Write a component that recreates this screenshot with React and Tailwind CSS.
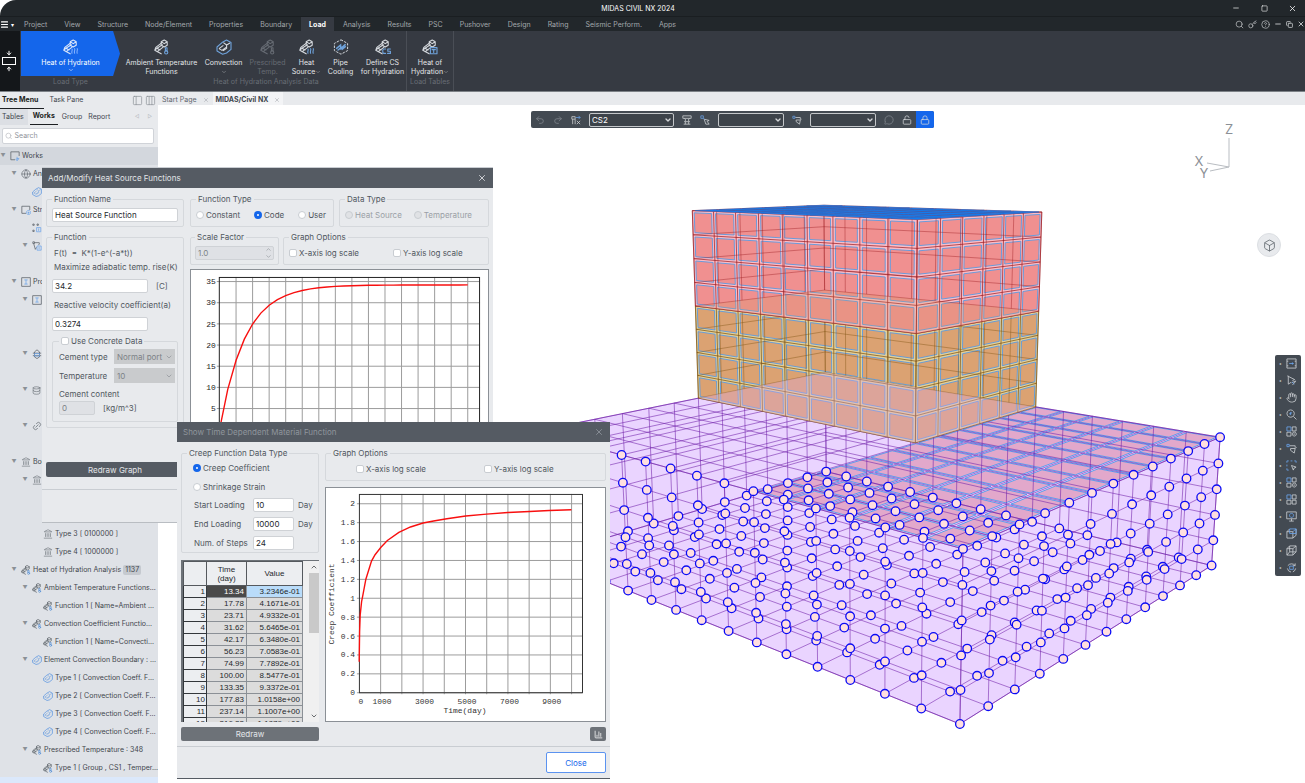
import React from 'react';
import clsx from 'clsx';
import {
  Search, Key, CircleHelp, Minus, Square, X, Copy, Menu, Undo2, Redo2, Lock, LockOpen,
  Box, ChevronDown, ChevronUp, BarChart3, Hand, ArrowDown, ArrowUp,
  Landmark, Link2, Database, PanelLeft, Columns3, MessageCircle, Globe,
} from 'lucide-react';

/* ---------- icons ---------- */

const HydrationIcon = ({ size = 16, tone = '#d5d9de', accent = '#6fa3dc', mark = 'wave' }) => (
  <svg width={size} height={size} viewBox="0 0 16 16" fill="none" stroke={tone} strokeWidth="1.1" strokeLinejoin="round" strokeLinecap="round">
    <path d="M7.2 2.8v3.4l3 1.8 3-1.8V2.8l-3-1.8zM7.2 2.8l3 1.8 3-1.8" />
    <path d="M7 4.4 1.8 8.4.8 11.2l6.4 3.6M3.2 12.6 8.8 8.4M1 11.2l2-2 5.4-3.4M3 9.2l3 1.8" />
    {mark === 'wave' && <path stroke={accent} d="M9 10.2c1 1-1 2 0 4M11.6 9.6c1 1-1 2.4 0 4.6M14.2 9.6c1 1-1 2.4 0 4.6" />}
    {mark === 'temp' && <><path stroke={accent} d="M11.4 8.8h1.6v3.2h-1.6z" /><circle stroke={accent} cx="12.2" cy="13.4" r="1.6" /></>}
    {mark === 'table' && <><rect stroke={accent} x="8.4" y="8.6" width="6.6" height="6.2" /><path stroke={accent} d="M10 10.6h3.4M11.7 10.6v2.8" /></>}
    {mark === 'cs' && <path stroke={accent} d="M10.6 10H8.6l-.8 1v2.4l.8 1h2M15.4 10h-2.6v2.2h2.6v2.2h-2.8" />}
  </svg>
);

const ConvectionIcon = ({ size = 16, tone = '#6fa3dc', accent = '#d5d9de' }) => (
  <svg width={size} height={size} viewBox="0 0 16 16" fill="none" stroke={tone} strokeWidth="1.1" strokeLinejoin="round">
    <path d="M6 3.6 10.5 1 15 3.4v7L10.6 14l-4 1.2L1 12V8z" />
    <path stroke={accent} d="M7.4 3.6 10.6 6v3.4L7 11.8M10.6 6 14 4M3 9.6l3 1.8 4-3M3 9.6l4.4-3.2" />
  </svg>
);

const PipeIcon = () => (
  <svg width="16" height="16" viewBox="0 0 16 16" fill="none" stroke="#d5d9de" strokeWidth="1">
    <path strokeDasharray="2.4 1.2" d="M8 .8 14.6 4.4v7.2L8 15.2 1.4 11.6V4.4z" />
    <path stroke="#6fa3dc" strokeWidth="1.4" strokeLinecap="round" d="m3.6 9.4 4-3.4v3.6l4.6-4M5 11l3.4-2.8M9 10.4l3.4-2.8" />
  </svg>
);

// small two-tone glyphs: base strokes follow the text colour, accent strokes are blue
const Glyph = ({ size = 10, base, accent }) => (
  <svg width={size} height={size} viewBox="0 0 12 12" fill="none" stroke="currentColor" strokeWidth="0.9">
    <path d={base} />
    <path d={accent} stroke="#6ba4ea" />
  </svg>
);

const glyphs = {
  works: { base: 'M1 1h10v5M6 10.5H1V1', accent: 'M8.5 7v4.5M6.5 9.5l2 2 2-2M8 9h3' },
  structure: { base: 'M1 1.5h9.5V6M6 10H1V1.5', accent: 'M9 6.5a2.5 2.5 0 1 0 .1 0zM9 8v2.5M7.8 9.2h2.5' },
  nodes: { base: 'M1 1.2h1.6v1.6H1zM6 1.2h1.6v1.6H6zM1 8.6h1.6v1.6H1z', accent: 'M5.5 5.5h5v5h-5zM8 6.5v3' },
  element: { base: 'M1 1h2v2H1zM9 2 3 2M2 3l2 7 1.5-2.5M9 2.5 8 5', accent: 'M6 6h5v5H6zM8.5 7v3' },
  section: { base: 'M.8.8h10.4v10.4H.8z', accent: 'M4 3.5h4M6 3.5v5M4 8.5h4' },
  plate: { base: 'M3 3.5 6 1l3 2.5v6L6 11.5 3 9.5zM1 5h10M1 8h10', accent: 'M3 5.5h6v3H3z' },
  frame: { base: 'M1 1h10v10H1zM1 3.5h1.5M9.5 3.5H11M1 8.5h1.5M9.5 8.5H11', accent: 'M3.5 6h5M7 4.8v2.4' },
  pick: { base: 'M1.5 1h1v9l3-2M2.5 1.5 9.5 5 7 6M6 8.5 11 6.5M7 11l3.5-4', accent: 'M6.5 7.5 9 10' },
  zoom: { base: 'M5 1a4 4 0 1 0 .1 0zM8 8l3.4 3.4', accent: 'M3.4 5.4 6.6 4M5 3.4v3.2' },
  grid: { base: 'M1 6.8h4.4V11H1zM6.8 1H11v4.4H6.8zM6.8 6.8H11V11H6.8z', accent: 'M1 1h4.4v4.4H1z' },
  gridEye: { base: 'M1 6.8h4.4V11H1zM6.8 1H11v4.4H6.8zM9 6.6a2.2 2.2 0 1 0 .1 0zM8 8.8h2', accent: 'M1 1h4.4v4.4H1z' },
  link: { base: 'M4 3h6v2M5 6h5l-1 5-4-3zM10 6l1.5-1.5', accent: 'M1 1.5h2.5V4H1z' },
  marquee: { base: 'M6 6l5 1.8-2.2 1L8 11z', accent: 'M1 3V1h2M5 1h2M9 1h2v2M1 5v2M1 9v2h2' },
  screen: { base: 'M.8 1h10.4v7.5H.8zM6 8.5v2.5M3.5 11h5', accent: 'M6 2.6a2.2 2.2 0 1 0 .1 0z' },
  cubeFront: { base: 'M1 4h6.5v7H1zM1 4l3-3M7.5 11l3.5-3V1', accent: 'M4 1h7v5H4zM7.5 4 11 1' },
  cube: { base: 'M1 4h6.5v7H1zM1 4l3-3h7v6.5L7.5 11M7.5 4 11 1M4 1v6.5M4 7.5 1 11M4 7.5h7', accent: '' },
  orbit: { base: 'M1.5 7a5 5 0 0 0 4 4M10.5 7a5 5 0 0 1-3 3.8M2 4a5 5 0 0 1 8 0M10 1.5V4H7.5', accent: 'M4 4.5h4v3.5H4z' },
  stage: { base: 'M1 2h4v3H1zM2 5v6M5 5v6M7 7l4 4M11 7l-4 4', accent: 'M6 3h5M9 1l2 2-2 2' },
  frameSet: { base: 'M1 1h10v3H1zM3 4l1.5 2L3 8h6L7.5 6 9 4M2 11h8M4 8v3M8 8v3', accent: '' },
  nodePick: { base: 'M5 5l6 1.5-2.5 1L11 11H7z', accent: 'M1 1h3v3H1zM4 4l1.5 1.5' },
};

/* ---------- ribbon ---------- */

const menus = [
  'Project', 'View', 'Structure', 'Node/Element', 'Properties', 'Boundary', 'Load', 'Analysis',
  'Results', 'PSC', 'Pushover', 'Design', 'Rating', 'Seismic Perform.', 'Apps',
];

const TitleBar = () => (
  <div className="flex h-4 shrink-0 items-center rounded-tl-2xl bg-[#22272b] text-white">
    <div className="w-11" />
    <h1 className="flex-1 pt-0.5 text-center text-[7px]">MIDAS CIVIL NX 2024</h1>
    <div className="flex w-[73px] items-center justify-between pr-2">
      <button aria-label="Minimize"><Minus size={8} /></button>
      <button aria-label="Maximize"><Square size={7} /></button>
      <button aria-label="Close"><X size={9} /></button>
    </div>
  </div>
);

const MenuBar = () => (
  <nav className="flex h-[15px] shrink-0 items-center border-t border-[#1a1e21] bg-[#22272b] text-[7px] text-[#a3a7ab]">
    <button className="flex w-4 items-center text-white" aria-label="Main menu">
      <Menu size={9} strokeWidth={3} />
      <span className="ml-0.5 text-[6px]">▾</span>
    </button>
    <div className="flex h-full flex-1 gap-px">
      {menus.map((m) => (
        <button key={m} className={clsx('h-full px-2 pt-0.5', m === 'Load' && 'bg-[#363a42] font-bold text-white')}>{m}</button>
      ))}
    </div>
    <div className="flex items-center gap-1 text-[#b8bbbe]">
      <Search size={9} />
      <Key size={9} />
      <CircleHelp size={9} />
      <Minus size={8} strokeWidth={3} />
      <Copy size={7} strokeWidth={3} />
      <X size={8} strokeWidth={3} />
    </div>
  </nav>
);

const tools = [
  { top: 'Ambient Temperature', bottom: 'Functions', width: 'w-[71px]', icon: <HydrationIcon mark="temp" /> },
  { top: 'Convection', bottom: '', arrow: true, width: 'w-[37px]', icon: <ConvectionIcon /> },
  { top: 'Prescribed', bottom: 'Temp.', width: 'w-[35px]', dim: true, icon: <HydrationIcon mark="temp" tone="#666b73" accent="#666b73" /> },
  { top: 'Heat', bottom: 'Source', arrow: true, width: 'w-[27px]', icon: <HydrationIcon /> },
  { top: 'Pipe', bottom: 'Cooling', width: 'w-[25px]', icon: <PipeIcon /> },
  { top: 'Define CS', bottom: 'for Hydration', width: 'w-[43px]', icon: <HydrationIcon mark="cs" /> },
];

const RibbonTool = ({ tool }) => (
  <button className={clsx('flex flex-col items-center whitespace-nowrap pt-2', tool.width, tool.dim ? 'text-[#666b73]' : 'text-[#e3e5e8]')}>
    {tool.icon}
    <span className="mt-[3px] h-[9px] leading-[9px]">{tool.top}</span>
    <span className="flex h-[9px] items-center leading-[9px]">
      {tool.bottom}
      {tool.arrow && <ChevronDown size={6} className="text-[#a3a7ab]" />}
    </span>
  </button>
);

const Ribbon = () => (
  <div className="flex h-[61px] shrink-0 border-b border-[#7d8287] bg-[#363a42] text-[7px]">
    <div className="flex w-5 flex-col items-center justify-center gap-px bg-[#14171a] pr-0.5 text-white">
      <ArrowDown size={6} strokeWidth={4} />
      <span className="h-2 w-3.5 border border-white" />
      <ArrowUp size={6} strokeWidth={4} />
    </div>
    <div className="ml-px w-[99px]">
      <button className="flex h-[45px] w-full flex-col items-center bg-[#1466eb] pt-2 text-white [clip-path:polygon(0_0,93%_0,100%_50%,93%_100%,0_100%)]">
        <HydrationIcon tone="#dbe6fa" accent="#7fb0ff" />
        <span className="mt-[3px] h-[9px] leading-[9px]">Heat of Hydration</span>
        <ChevronDown size={6} />
      </button>
      <p className="text-center leading-[12px] text-[#686d75]">Load Type</p>
    </div>
    <div className="ml-1.5 w-[281px] border-r border-[#4a4e56]">
      <div className="flex h-[45px] gap-2">
        {tools.map((t) => <RibbonTool key={t.top} tool={t} />)}
      </div>
      <p className="text-center leading-[12px] text-[#686d75]">Heat of Hydration Analysis Data</p>
    </div>
    <div className="w-[47px] border-r border-[#4a4e56]">
      <div className="flex h-[45px] justify-center">
        <RibbonTool tool={{ top: 'Heat of', bottom: 'Hydration', arrow: true, width: 'w-[37px]', icon: <HydrationIcon mark="table" /> }} />
      </div>
      <p className="text-center leading-[12px] text-[#686d75]">Load Tables</p>
    </div>
  </div>
);

/* ---------- tree ---------- */

const heat = <HydrationIcon size={10} tone="#5a6168" accent="#5b93d6" mark="temp" />;
const conv = <ConvectionIcon size={10} tone="#4f8fe0" accent="#7fa9dd" />;
const support = <Landmark size={10} strokeWidth={1.3} />;

const treeRows = [
  { level: 0, open: true, icon: <Glyph {...glyphs.works} />, label: 'Works' },
  { level: 1, open: true, icon: <Globe size={10} strokeWidth={1.5} />, label: 'Analysis' },
  { level: 2, icon: conv },
  { level: 1, open: true, icon: <Glyph {...glyphs.structure} />, label: 'Structure' },
  { level: 2, icon: <Glyph {...glyphs.nodes} /> },
  { level: 2, open: true, icon: <Glyph {...glyphs.element} /> },
  {},
  { level: 1, open: true, icon: <Glyph {...glyphs.section} />, label: 'Properties' },
  { level: 2, open: true, icon: <Glyph {...glyphs.section} /> },
  {},
  {},
  { level: 2, open: true, icon: <Glyph {...glyphs.plate} /> },
  {},
  { level: 2, open: true, icon: <Database size={9} strokeWidth={1.5} /> },
  {},
  { level: 2, open: true, icon: <Link2 size={10} strokeWidth={1.5} className="-rotate-45" /> },
  {},
  { level: 1, open: true, icon: support, label: 'Boundary' },
  { level: 2, open: true, icon: support },
  {},
  {},
  { level: 3, icon: support, label: 'Type 3 [ 0100000 ]' },
  { level: 3, icon: support, label: 'Type 4 [ 1000000 ]' },
  { level: 1, open: true, icon: heat, label: 'Heat of Hydration Analysis', count: 1137 },
  { level: 2, open: true, icon: heat, label: 'Ambient Temperature Functions...' },
  { level: 3, icon: heat, label: 'Function 1 [ Name=Ambient ...' },
  { level: 2, open: true, icon: heat, label: 'Convection Coefficient Functio...' },
  { level: 3, icon: heat, label: 'Function 1 [ Name=Convecti...' },
  { level: 2, open: true, icon: conv, label: 'Element Convection Boundary : ...' },
  { level: 3, icon: conv, label: 'Type 1 [ Convection Coeff. F...' },
  { level: 3, icon: conv, label: 'Type 2 [ Convection Coeff. F...' },
  { level: 3, icon: conv, label: 'Type 3 [ Convection Coeff. F...' },
  { level: 3, icon: conv, label: 'Type 4 [ Convection Coeff. F...' },
  { level: 2, open: true, icon: heat, label: 'Prescribed Temperature : 348' },
  { level: 3, icon: heat, label: 'Type 1 [ Group , CS1 , Temper...' },
  { active: true },
];

const indents = ['pl-0', 'pl-[11px]', 'pl-[22px]', 'pl-[33px]'];

const TreePane = () => (
  <aside className="flex w-[158px] shrink-0 flex-col bg-[#dfe2e7] text-[7px] text-[#3f464d]">
    <div className="flex h-[17px] items-center gap-[3px] bg-[#e8eaed]">
      <button className="h-full border-b border-[#1c1f22] pr-1.5 pl-0.5 font-bold text-[#1c1f22]">Tree Menu</button>
      <button className="px-0.5">Task Pane</button>
      <div className="ml-auto flex gap-0.5 pr-0.5 text-[#8b9096]">
        <PanelLeft size={11} strokeWidth={1.5} />
        <Columns3 size={11} strokeWidth={1.5} />
      </div>
    </div>
    <div className="flex h-4 items-center gap-0.5 bg-[#e8eaed]">
      <button className="h-full bg-[#dcdfe4] pr-1 pl-0.5">Tables</button>
      <button className="h-full border-b border-[#1c1f22] px-[3px] font-bold text-[#1c1f22]">Works</button>
      <button className="px-0.5">Group</button>
      <button className="px-0.5">Report</button>
      <span className="ml-auto flex gap-2 pr-1.5 text-[5px] text-[#b3b7bc]"><span>◁</span><span>▷</span></span>
    </div>
    <div className="bg-[#e8eaed] py-[3px] pr-1 pl-0.5">
      <label className="flex h-4 items-center gap-0.5 rounded-xs border border-[#d0d3d8] bg-white px-0.5">
        <Search size={8} className="text-[#b3b7bc]" />
        <input aria-label="Search" placeholder="Search" className="w-full outline-none placeholder:text-[#8f949a]" />
      </label>
    </div>
    <ul className="min-h-0 flex-1 overflow-hidden">
      {treeRows.map((row, i) => (
        <li key={i} className={clsx('flex h-[18px] items-center gap-px whitespace-nowrap', indents[row.level || 0], i === 0 && 'bg-[#d3d7dd]', row.active && 'bg-[#dbe8fb]')}>
          <span className="w-1.5 text-center text-[5px] text-[#8b9096]">{row.open && '▼'}</span>
          <span className="ml-[3px] w-[11px] text-[#5a6168]">{row.icon}</span>
          <span>{row.label}</span>
          {row.count && <span className="ml-px rounded-xs bg-[#c5c9cf] px-0.5">{row.count}</span>}
        </li>
      ))}
    </ul>
  </aside>
);

/* ---------- 3D model ---------- */

// 3x4 camera matrix for grid coordinates (u, v, z), last entry is 1
const cam = [
  -12.2053949, 60.7997144, -5.94001655, 959.880218,
  4.75891838, 5.37424879, -38.7592762, 724.008726,
  0.0285916942, 0.0328666333, -0.00681668142,
];

const project = ([u, v, z]) => {
  const w = cam[8] * u + cam[9] * v + cam[10] * z + 1;
  return [
    (cam[0] * u + cam[1] * v + cam[2] * z + cam[3]) / w,
    (cam[4] * u + cam[5] * v + cam[6] * z + cam[7]) / w,
  ];
};

const toPath = (pts) => 'M' + pts.map((p) => project(p).map((n) => n.toFixed(1)).join(' ')).join('L');

// a face is a rectangle in the plane where one axis is constant
const face = (at, a0, a1, b0, b1) => ({ at, a0, a1, b0, b1 });
const onU = (u) => (a, b) => [u, a, b];
const onV = (v) => (a, b) => [a, v, b];
const onZ = (z) => (a, b) => [a, b, z];

const outline = ({ at, a0, a1, b0, b1 }) => toPath([at(a0, b0), at(a1, b0), at(a1, b1), at(a0, b1)]) + 'Z';

const gridLines = ({ at, a0, a1, b0, b1 }) => {
  let d = '';
  for (let a = a0; a <= a1; a++) d += toPath([at(a, b0), at(a, b1)]);
  for (let b = b0; b <= b1; b++) d += toPath([at(a0, b), at(a1, b)]);
  return d;
};

const cells = ({ at, a0, a1, b0, b1 }, s = 0.09) => {
  let d = '';
  for (let a = a0; a < a1; a++) {
    for (let b = b0; b < b1; b++) d += outline({ at, a0: a + s, a1: a + 1 - s, b0: b + s, b1: b + 1 - s });
  }
  return d;
};

const nodes = [];
for (let u = 0; u <= 15; u++) for (let v = 0; v <= 12; v++) nodes.push([u, v, 0]);
for (let z = 1; z <= 5; z++) {
  for (let u = 0; u <= 15; u++) nodes.push([u, 0, z]);
  for (let v = 1; v <= 12; v++) nodes.push([0, v, z]);
}

const slab = [
  face(onZ(0), 0, 15, 0, 12), face(onZ(5), 0, 15, 0, 12),
  face(onU(0), 0, 12, 0, 5), face(onU(15), 0, 12, 0, 5),
  face(onV(0), 0, 15, 0, 5), face(onV(12), 0, 15, 0, 5),
];
const cooled = face(onZ(5), 0, 6, 0, 12);
const walls = (z0, z1) => [face(onV(6), 6, 15, z0, z1), face(onU(6), 6, 12, z0, z1)];
const backs = (z0, z1) => [face(onV(12), 6, 15, z0, z1), face(onU(15), 6, 12, z0, z1)];
const floorAt = (z) => face(onZ(z), 6, 15, 6, 12);

const draw = (faces, fn) => faces.map((f) => fn(f)).join('');

const Lift = ({ z0, z1, gap, fill, line }) => (
  <>
    {walls(z0, z1).map((f, i) => <path key={i} d={outline(f)} fill={gap} />)}
    {walls(z0, z1).map((f, i) => <path key={i} d={cells(f)} fill={fill} stroke="#5a9ae0" strokeWidth="0.9" />)}
    <path d={draw(backs(z0, z1), gridLines)} fill="none" stroke={line} strokeWidth="0.7" opacity="0.6" />
    <path d={draw(walls(z0, z1), gridLines)} fill="none" stroke={line} strokeWidth="0.9" opacity="0.8" />
  </>
);

const Model = () => (
  <svg className="h-full w-full" viewBox="158 105 1147 678" preserveAspectRatio="xMidYMid meet" role="img" aria-label="Finite element model">
    {slab.map((f, i) => <path key={i} d={outline(f)} fill="#ead4ff" />)}
    <path d={cells(cooled, 0.07)} fill="#e2a8cb" stroke="#3b96ee" strokeWidth="0.8" />
    <path d={draw(slab, gridLines)} fill="none" stroke="#6f1fa8" strokeWidth="0.8" opacity="0.7" />
    <Lift z0={5} z1={9} gap="#e3cf98" fill="#dba272" line="#7d5210" />
    <path d={outline(floorAt(5))} fill="#e0a8e6" opacity="0.35" />
    <Lift z0={9} z1={13} gap="#fbbcc6" fill="#f09090" line="#9c1c22" />
    <path d={outline(floorAt(9))} fill="#d0a060" opacity="0.22" />
    <path d={outline(floorAt(13))} fill="#b8a0c8" />
    <path d={cells(floorAt(13), 0.06)} fill="#0f7ff5" stroke="#0f7ff5" strokeWidth="0.7" />
    <path d={gridLines(floorAt(13))} fill="none" stroke="#9c1c22" strokeWidth="0.5" opacity="0.4" />
    <g fill="#ffdfdf" stroke="#0a0af5" strokeWidth="1.3">
      {nodes.map((n) => {
        const [x, y] = project(n);
        return <circle key={n.join()} cx={x.toFixed(1)} cy={y.toFixed(1)} r="4.3" />;
      })}
    </g>
    <path d="M1229 138v29l-22-4M1229 167l-19 4" stroke="#b9bdc2" fill="none" />
    <g className="text-[13px]" fill="#8b9096" textAnchor="middle" fontFamily="Inter, sans-serif">
      <text x="1229" y="134">Z</text>
      <text x="1199" y="166">X</text>
      <text x="1204" y="178">Y</text>
    </g>
  </svg>
);

/* ---------- viewport bars ---------- */

const BarSelect = ({ label, value = '', width }) => (
  <span className={clsx('relative block', width)}>
    <select aria-label={label} className="block h-3.5 w-full appearance-none rounded-xs border border-[#c4c7ca] bg-[#3d434a] px-0.5 text-[8px] leading-[12px] text-white">
      <option>{value}</option>
    </select>
    <ChevronDown size={8} strokeWidth={4} className="pointer-events-none absolute top-[3px] right-0.5" />
  </span>
);

const StageBar = () => (
  <div className="absolute top-1.5 left-[373px] flex h-[17px] items-center gap-2 overflow-hidden rounded-xs bg-[#434a52] pl-1 text-[#d4d7da]">
    <Undo2 size={10} className="text-[#7d838a]" />
    <Redo2 size={10} className="text-[#7d838a]" />
    <Glyph {...glyphs.stage} />
    <BarSelect label="Stage" value="CS2" width="w-[85px]" />
    <Glyph {...glyphs.frameSet} />
    <Glyph {...glyphs.nodePick} />
    <BarSelect label="Group" width="w-[66px]" />
    <Glyph {...glyphs.link} />
    <BarSelect label="Named plane" width="w-[66px]" />
    <MessageCircle size={10} className="text-[#7d838a]" />
    <LockOpen size={10} strokeWidth={1.8} />
    <button className="-ml-1 flex h-full w-[18px] items-center justify-center bg-[#1466eb]" aria-label="Lock"><Lock size={10} strokeWidth={1.8} /></button>
  </div>
);

const sideTools = ['frame', 'pick', 'hand', 'zoom', 'gridEye', 'link', 'marquee', 'gridEye', 'grid', 'screen', 'cubeFront', 'cube', 'orbit'];

const SideBar = () => (
  <div className="absolute top-[250px] right-1 flex w-[26px] flex-col rounded-xs bg-[#434a52] text-[#c9cdd1]">
    {sideTools.map((name, i) => (
      <button key={i} aria-label={`View tool ${i + 1}`} className="flex h-[17px] items-center gap-[5px] pl-1">
        <span className="text-[4px]">◂</span>
        {name === 'hand' ? <Hand size={11} strokeWidth={1.8} /> : <Glyph size={11} {...glyphs[name]} />}
      </button>
    ))}
  </div>
);

/* ---------- form parts ---------- */

const Group = ({ title, className, children }) => (
  <fieldset className={clsx('min-w-0 rounded-xs border border-[#d5d8dc]', className)}>
    <legend className="px-0.5 leading-[12px]">{title}</legend>
    {children}
  </fieldset>
);

const Choice = ({ type, name, label, ...rest }) => (
  <label className={clsx('flex items-center gap-0.5 whitespace-nowrap', rest.disabled && 'text-[#9a9fa5]')}>
    <input
      type={type}
      name={name}
      className={clsx(
        'size-2 appearance-none border border-[#c9cdd2] bg-white checked:border-[3px] checked:border-[#1466eb] disabled:bg-[#e0e2e5]',
        type === 'radio' ? 'rounded-full' : 'rounded-xs'
      )}
      {...rest}
    />
    {label}
  </label>
);

const TextBox = ({ className, ...rest }) => (
  <input className={clsx('h-3.5 rounded-xs border border-[#cfd2d6] bg-white px-0.5 text-[#24282c] disabled:bg-[#dfe1e5] disabled:text-[#7d8287]', className)} {...rest} />
);

const DimSelect = ({ id, value }) => (
  <span className="relative block w-[61px]">
    <select id={id} disabled className="block h-[15px] w-full appearance-none bg-[#c9cbcd] px-[3px] text-[#7d8287]"><option>{value}</option></select>
    <ChevronDown size={8} className="pointer-events-none absolute top-1 right-0.5 text-[#8b9096]" />
  </span>
);

const DialogTitle = ({ title, dim }) => (
  <header className={clsx('flex h-5 items-center justify-between bg-[#555b63] px-1.5', dim ? 'text-[#8f959c]' : 'text-[#e3e5e8]')}>
    <h2>{title}</h2>
    <button aria-label="Close dialog"><X size={10} strokeWidth={2} /></button>
  </header>
);

/* ---------- heat source dialog ---------- */

const heatPoints = Array.from({ length: 31 }, (_, t) => {
  const f = 34.2 * (1 - Math.exp(-0.3274 * t));
  return `${(28.7 + t * 8.33).toFixed(1)},${(160.8 - f * 4.262).toFixed(1)}`;
}).join(' ');

const HeatChart = () => (
  <svg className="h-[207px] w-full border border-[#8b9096] bg-white" viewBox="0 0 299 207" preserveAspectRatio="xMinYMin slice">
    <g stroke="#9b9b9b" strokeWidth="1">
      {Array.from({ length: 15 }, (_, i) => <path key={i} d={`M${28.7 + 16.66 * (i + 1)} 7V161`} />)}
      {[5, 10, 15, 20, 25, 30, 35].map((v) => <path key={v} d={`M26 ${160.8 - v * 4.262}H291`} />)}
    </g>
    <rect x="28.5" y="7.5" width="262" height="154" fill="none" stroke="#222" />
    <g className="text-[8px]" fill="#222" textAnchor="end" fontFamily="'Liberation Mono', monospace">
      {[5, 10, 15, 20, 25, 30, 35].map((v) => <text key={v} x="25" y={163.5 - v * 4.262}>{v}</text>)}
    </g>
    <polyline points={heatPoints} fill="none" stroke="#f80f0f" strokeWidth="1.4" />
  </svg>
);

const HeatSourceDialog = () => (
  <section className="absolute top-[75px] left-[42px] w-[451px] border-t border-[#c9cdd2] bg-[#e8eaed] text-[8px] text-[#50575e]">
    <DialogTitle title="Add/Modify Heat Source Functions" />
    <div className="flex gap-1.5 px-1 pt-[5px]">
      <div className="flex w-[138px] flex-col gap-1">
        <Group title="Function Name" className="h-[34px] px-[5px]">
          <TextBox aria-label="Function Name" defaultValue="Heat Source Function" className="mt-[3px] block w-full" />
        </Group>
        <Group title="Function" className="h-[197px] px-[5px]">
          <p className="mt-[3px] ml-0.5 leading-[14px] whitespace-pre">F(t)  =  K*(1-e^(-a*t))</p>
          <label htmlFor="rise" className="ml-0.5 block leading-[14px] whitespace-nowrap">Maximize adiabatic temp. rise(K)</label>
          <div className="mt-[5px] flex items-center gap-2">
            <TextBox id="rise" defaultValue="34.2" className="w-24" />
            <span>[C]</span>
          </div>
          <label htmlFor="velocity" className="mt-[5px] ml-0.5 block leading-[14px] whitespace-nowrap">Reactive velocity coefficient(a)</label>
          <TextBox id="velocity" defaultValue="0.3274" className="mt-[5px] block w-24" />
          <Group title={<Choice type="checkbox" label="Use Concrete Data" />} className="mt-1 pr-0.5 pb-1.5 pl-1.5">
            <div className="mt-0.5 flex items-center justify-between">
              <label htmlFor="cement">Cement type</label>
              <DimSelect id="cement" value="Normal port" />
            </div>
            <div className="mt-1 flex items-center justify-between">
              <label htmlFor="temperature">Temperature</label>
              <DimSelect id="temperature" value="10" />
            </div>
            <label htmlFor="content" className="mt-1 block leading-[14px]">Cement content</label>
            <div className="flex items-center gap-2">
              <TextBox id="content" disabled defaultValue="0" className="w-9" />
              <span>[kg/m^3]</span>
            </div>
          </Group>
        </Group>
        <button className="mt-[30px] h-[15px] rounded-xs bg-[#555b63] text-[#e3e5e8]">Redraw Graph</button>
      </div>
      <div className="flex flex-1 flex-col gap-1">
        <div className="flex gap-[5px]">
          <Group title="Function Type" className="h-[34px] w-[144px] px-[5px]">
            <div className="mt-1 flex justify-between pr-0.5">
              <Choice type="radio" name="ftype" label="Constant" />
              <Choice type="radio" name="ftype" label="Code" defaultChecked />
              <Choice type="radio" name="ftype" label="User" />
            </div>
          </Group>
          <Group title="Data Type" className="h-[34px] flex-1 px-[5px]">
            <div className="mt-1 flex gap-3">
              <Choice type="radio" name="dtype" label="Heat Source" disabled />
              <Choice type="radio" name="dtype" label="Temperature" disabled />
            </div>
          </Group>
        </div>
        <div className="flex gap-1">
          <Group title="Scale Factor" className="h-[34px] w-[89px] px-1">
            <div className="relative mt-[3px]">
              <TextBox aria-label="Scale Factor" disabled defaultValue="1.0" className="block w-full" />
              <ChevronUp size={7} className="absolute top-0 right-0.5 text-[#8b9096]" />
              <ChevronDown size={7} className="absolute right-0.5 bottom-0 text-[#8b9096]" />
            </div>
          </Group>
          <Group title="Graph Options" className="h-[34px] flex-1 px-[5px]">
            <div className="mt-1 flex gap-[34px]">
              <Choice type="checkbox" label="X-axis log scale" />
              <Choice type="checkbox" label="Y-axis log scale" />
            </div>
          </Group>
        </div>
        <HeatChart />
      </div>
    </div>
    <footer className="mt-3 h-[34px] border-t border-b border-t-[#c9cdd2] border-b-[#b9bdc2]" />
  </section>
);

/* ---------- creep dialog ---------- */

const creepRows = [
  ['13.34', '3.2346e-01'], ['17.78', '4.1671e-01'], ['23.71', '4.9332e-01'], ['31.62', '5.6465e-01'],
  ['42.17', '6.3480e-01'], ['56.23', '7.0583e-01'], ['74.99', '7.7892e-01'], ['100.00', '8.5477e-01'],
  ['133.35', '9.3372e-01'], ['177.83', '1.0158e+00'], ['237.14', '1.1007e+00'], ['316.23', '1.1879e+00'],
];

const creepPoints = '33.3,175.3 33.7,144.7 34.3,128 35.7,114.7 37,108 40,92 45.7,73.7 49.3,67.3 55,60 61.7,53 73.3,44.7 85,39.3 97.7,35.3 108.3,33.3 121.7,31 140.7,28.3 161.7,26.3 183.3,24.7 205,23.7 225,22.7 247.3,22';
const creepTicks = ['0', '0.2', '0.4', '0.6', '0.8', '1', '1.2', '1.4', '1.6', '1.8', '2'];

const CreepChart = () => (
  <svg className="h-[235px] w-full border border-[#8b9096] bg-white" viewBox="0 0 281 235" fontFamily="'Liberation Mono', monospace">
    <g stroke="#9b9b9b" strokeWidth="1">
      {creepTicks.map((t, i) => <path key={t} d={`M31 ${206.5 - i * 19.06}H258`} />)}
      {Array.from({ length: 10 }, (_, i) => <path key={i} d={`M${33.5 + 21.4 * (i + 1)} 6V208`} />)}
    </g>
    <rect x="33.5" y="6.5" width="225" height="200" fill="none" stroke="#333" />
    <g className="text-[8px]" fill="#333">
      {creepTicks.map((t, i) => <text key={t} x="29" y={209 - i * 19.06} textAnchor="end">{t}</text>)}
      {[0, 1000, 3000, 5000, 7000, 9000].map((t) => <text key={t} x={35 + t * 0.0214} y="218" textAnchor="middle">{t}</text>)}
      <text x="140" y="227" textAnchor="middle">Time(day)</text>
      <text transform="translate(8 117) rotate(-90)" textAnchor="middle">Creep Coefficient</text>
    </g>
    <polyline points={creepPoints} fill="none" stroke="#f80f0f" strokeWidth="1.4" />
  </svg>
);

const CreepTable = () => (
  <div className="flex h-[162px] overflow-hidden border-t border-l-2 border-[#6d7278] bg-[#f0f0f0] text-[#24282c]">
    <table className="h-fit w-[120px] table-fixed border-collapse font-['Liberation_Sans',sans-serif] text-[8px] leading-[9px]">
      <thead>
        <tr className="h-[24px] bg-[#eceef1]">
          <th className="w-[23px] border border-[#55595e]" aria-label="Row" />
          <th className="w-[40px] border border-[#55595e] font-normal">Time<br />(day)</th>
          <th className="border border-[#55595e] font-normal">Value</th>
        </tr>
      </thead>
      <tbody>
        {creepRows.map(([time, value], i) => (
          <tr key={time} className="h-[12px] bg-[#dcdcdc] text-right">
            <th className="border border-[#33373b] bg-[#eceef1] p-0 pr-px text-right font-normal">{i + 1}</th>
            <td className={clsx('border border-[#8b9096] p-0 pr-0.5', i === 0 && 'bg-[#4a4a4a] text-white')}>{time}</td>
            <td className={clsx('border border-[#8b9096] p-0 pr-0.5', i === 0 && 'bg-[#b9dcfa]')}>{value}</td>
          </tr>
        ))}
      </tbody>
    </table>
    <div className="ml-auto flex w-2.5 flex-col items-center">
      <ChevronUp size={8} className="my-0.5 shrink-0" />
      <span className="h-[60px] w-full shrink-0 bg-[#c9c9c9]" />
      <ChevronDown size={8} className="mt-auto mb-0.5 shrink-0" />
    </div>
  </div>
);

const Field = ({ id, label, value, unit }) => (
  <div className="flex items-center">
    <label htmlFor={id} className="ml-px w-[59px] whitespace-nowrap">{label}</label>
    <TextBox id={id} defaultValue={value} className="w-[41px]" />
    <span className="ml-1">{unit}</span>
  </div>
);

const CreepDialog = () => (
  <section className="absolute top-[330px] left-[177px] w-[433px] border-b border-[#555b63] bg-[#e8eaed] text-[8px] text-[#50575e]">
    <DialogTitle title="Show Time Dependent Material Function" dim />
    <div className="flex gap-1.5 px-1 pt-[5px] pb-[5px]">
      <div className="flex w-[138px] flex-col">
        <Group title="Creep Function Data Type" className="px-[5px]">
          <div className="grid h-[93px] grid-rows-5 items-center pl-1.5">
            <Choice type="radio" name="creep" label="Creep Coefficient" defaultChecked />
            <Choice type="radio" name="creep" label="Shrinkage Strain" />
            <Field id="start" label="Start Loading" value="10" unit="Day" />
            <Field id="end" label="End Loading" value="10000" unit="Day" />
            <Field id="steps" label="Num. of Steps" value="24" />
          </div>
        </Group>
        <div className="mt-[7px]"><CreepTable /></div>
        <button className="mt-[5px] h-3.5 rounded-xs bg-[#6d7278] text-[#e3e5e8]">Redraw</button>
      </div>
      <div className="flex flex-1 flex-col items-end">
        <Group title="Graph Options" className="h-[34px] w-full px-[5px]">
          <div className="mt-1 flex gap-[58px] pl-[25px]">
            <Choice type="checkbox" label="X-axis log scale" />
            <Choice type="checkbox" label="Y-axis log scale" />
          </div>
        </Group>
        <div className="mt-1.5 w-full"><CreepChart /></div>
        <button aria-label="Chart settings" className="mt-[5px] flex h-3.5 w-4 items-center justify-center rounded-xs bg-[#6d7278] text-white"><BarChart3 size={9} /></button>
      </div>
    </div>
    <footer className="flex justify-end border-t border-[#c9cdd2] px-1 pt-[5px] pb-[5px]">
      <button className="h-[21px] w-[60px] rounded-xs border border-[#5b93f0] bg-white text-[#1466eb]">Close</button>
    </footer>
  </section>
);

/* ---------- app ---------- */

const App = () => (
  <div className="flex h-screen flex-col overflow-hidden bg-white font-['Inter',sans-serif] leading-normal">
    <TitleBar />
    <MenuBar />
    <Ribbon />
    <main className="relative flex min-h-0 flex-1">
      <TreePane />
      <div className="flex min-w-0 flex-1 flex-col">
        <div className="flex h-[13px] shrink-0 items-center gap-1 bg-[#e8eaed] text-[7px] text-[#5f666d]">
          <button className="flex items-center gap-1.5 pt-[3px] pl-1">Start Page <X size={6} className="text-[#9a9fa5]" /></button>
          <button className="flex h-full items-center gap-1.5 bg-[#f3f4f6] px-[3px] pt-[3px] font-bold text-[#3f464d]">MIDAS/Civil NX <X size={6} className="text-[#9a9fa5]" /></button>
        </div>
        <div className="relative min-h-0 flex-1">
          <Model />
          <StageBar />
          <button aria-label="Home view" className="absolute top-32 right-6 flex size-6 items-center justify-center rounded-full border border-[#dcdfe3] bg-[#e8eaed] text-[#5f666d]"><Box size={13} strokeWidth={1.5} /></button>
          <SideBar />
        </div>
      </div>
      <HeatSourceDialog />
      <CreepDialog />
    </main>
  </div>
);

export default App;
